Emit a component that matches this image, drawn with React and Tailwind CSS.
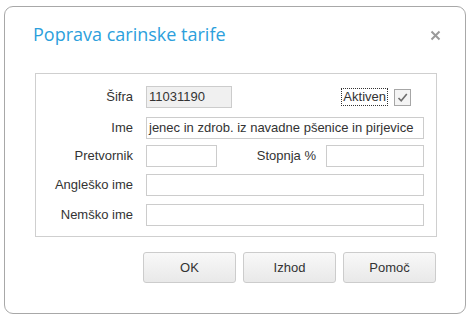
import React from "react";

const labelCls = "w-[110px] pr-[13px] text-right shrink-0";
const inputCls = "h-[22px] border border-[#cccccc] px-[2px] flex items-center overflow-hidden whitespace-nowrap";

const Field = ({ label, children, className = "" }) => (
    <div className={"flex items-center " + className}>
        <div className={labelCls}>{label}</div>
        {children}
    </div>
);

const App = () => {
    return (
        <div className="w-[471px] h-[320px] bg-white pt-[6px] pl-[4px] text-[13px] text-[#333333]" style={{ fontFamily: "'Liberation Sans', Arial, sans-serif" }}>
            <div className="w-[462px] h-[308px] border border-[#a8a8a8] rounded-[9px] bg-white flex flex-col">
                <div className="flex items-center justify-between pt-[15px] pl-[28px] pr-[24px]">
                    <h1 className="text-[18px] leading-[24px] text-[#2c9fdc]" style={{ fontFamily: "'Open Sans', sans-serif" }}>
                        Poprava carinske tarife
                    </h1>
                    <svg width="11" height="11" viewBox="0 0 11 11" className="mt-[2px]">
                        <path d="M1.5 1.5 L9.5 9.5 M9.5 1.5 L1.5 9.5" stroke="#9a9a9a" strokeWidth="2" />
                    </svg>
                </div>

                <div className="ml-[30px] mt-[27px] w-[402px] h-[164px] border border-[#cfcfcf] pt-[12px]">
                    <Field label="Šifra">
                        <div className={inputCls + " w-[86px] bg-[#f0f0f0]"}>11031190</div>
                        <div className="ml-auto mr-[25px] flex items-center">
                            <span className="border border-dotted border-[#333333] px-[1px] leading-[16px]">Aktiven</span>
                            <span className="ml-[6px] w-[17px] h-[17px] border border-[#a6a6a6] bg-[#f4f4f4] flex items-center justify-center">
                                <svg width="13" height="13" viewBox="0 0 13 13">
                                    <path d="M2.5 7 L5.2 9.8 L10.8 3" fill="none" stroke="#6e6e6e" strokeWidth="1.6" />
                                </svg>
                            </span>
                        </div>
                    </Field>
                    <Field label="Ime" className="mt-[9px]">
                        <div className={inputCls + " w-[278px] bg-white"}>jenec in zdrob. iz navadne pšenice in pirjevice</div>
                    </Field>
                    <Field label="Pretvornik" className="mt-[6px]">
                        <div className={inputCls + " w-[71px] bg-white"}></div>
                        <div className="w-[109px] text-right pr-[10px] shrink-0">Stopnja %</div>
                        <div className={inputCls + " w-[98px] bg-white"}></div>
                    </Field>
                    <Field label="Angleško ime" className="mt-[7px]">
                        <div className={inputCls + " w-[278px] bg-white"}></div>
                    </Field>
                    <Field label="Nemško ime" className="mt-[8px]">
                        <div className={inputCls + " w-[278px] bg-white"}></div>
                    </Field>
                </div>

                <div className="flex justify-end gap-[7px] mt-[15px] pr-[29px]">
                    {["OK", "Izhod", "Pomoč"].map((b) => (
                        <button key={b} className="w-[93px] h-[31px] border border-[#cccccc] rounded-[3px] bg-gradient-to-b from-[#f8f8f8] to-[#e9e9e9] text-[#333333]">
                            {b}
                        </button>
                    ))}
                </div>
            </div>
        </div>
    );
};

export default App;
